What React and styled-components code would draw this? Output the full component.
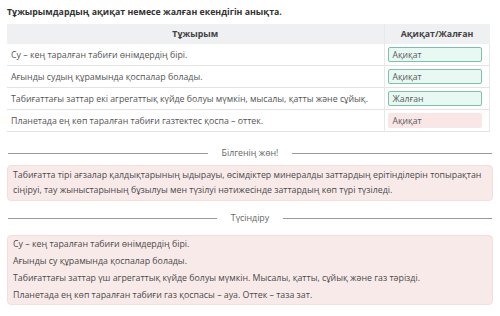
import styled, { createGlobalStyle } from 'styled-components';

const GlobalStyle = createGlobalStyle`
  body {
    margin: 0;
    background: #fff;
    font-family: "Open Sans", "Noto Sans", sans-serif;
    color: #3c3c3c;
  }
`;

const Page = styled.div`
  width: 500px;
  padding: 6px 7px 0 7px;
  box-sizing: border-box;
`;

const Title = styled.h1`
  margin: 0 0 5px 0;
  font-size: 8.8px;
  font-weight: 700;
  line-height: 13px;
  color: #333;
`;

const Table = styled.table`
  width: 483px;
  border-collapse: collapse;
  font-size: 8.8px;
`;

const Th = styled.th`
  height: 20px;
  padding: 0;
  background: #eef0f2;
  font-weight: 700;
  font-size: 8.8px;
  color: #444;
  text-align: center;
  border-left: ${(p) => (p.$divided ? '1px solid #e8e8e8' : 'none')};
`;

const Tr = styled.tr`
  border-bottom: 1px solid #e3e3e3;
`;

const Td = styled.td`
  height: 21px;
  padding: 0 0 0 ${(p) => (p.$divided ? '3px' : '4px')};
  color: #555;
  white-space: nowrap;
  border-left: ${(p) => (p.$divided ? '1px solid #e8e8e8' : 'none')};
  border-right: ${(p) => (p.$divided ? '1px solid #e8e8e8' : 'none')};
`;

const Answer = styled.div`
  width: 94px;
  height: 15px;
  box-sizing: border-box;
  padding-left: 4px;
  display: flex;
  align-items: center;
  font-size: 8.6px;
  color: #5a5a5a;
  border-radius: 2px;
  background: ${(p) => (p.$correct ? '#e8f8f2' : '#f9e6e6')};
  border: 1px solid ${(p) => (p.$correct ? '#7cc0ad' : '#f9e6e6')};
`;

const Divider = styled.div`
  display: flex;
  align-items: center;
  gap: 14px;
  margin: ${(p) => p.$margin};
  font-size: 8.8px;
  line-height: 13px;
  color: #666;

  &::before,
  &::after {
    content: '';
    flex: 1;
    height: 1px;
    background: #9a9a9a;
  }
`;

const Note = styled.div`
  background: #f9eaea;
  border: 1px solid #f3dede;
  border-radius: 4px;
  padding: ${(p) => p.$pad};
  font-size: 8.8px;
  line-height: ${(p) => p.$lh};
  color: #4a4a4a;
`;

const rows = [
  { text: 'Су – кең таралған табиғи өнімдердің бірі.', answer: 'Ақиқат', correct: true },
  { text: 'Ағынды судың құрамында қоспалар болады.', answer: 'Ақиқат', correct: true },
  { text: 'Табиғаттағы заттар екі агрегаттық күйде болуы мүмкін, мысалы, қатты және сұйық.', answer: 'Жалған', correct: true },
  { text: 'Планетада ең көп таралған табиғи газтектес қоспа – оттек.', answer: 'Ақиқат', correct: false },
];

const explanation = [
  'Су – кең таралған табиғи өнімдердің бірі.',
  'Ағынды су құрамында қоспалар болады.',
  'Табиғаттағы заттар үш агрегаттық күйде болуы мүмкін. Мысалы, қатты, сұйық және газ тәрізді.',
  'Планетада ең көп таралған табиғи газ қоспасы – ауа. Оттек – таза зат.',
];

export default function App() {
  return (
    <Page>
      <GlobalStyle />
      <Title>Тұжырымдардың ақиқат немесе жалған екендігін анықта.</Title>
      <Table>
        <thead>
          <tr>
            <Th>Тұжырым</Th>
            <Th $divided style={{ width: 105 }}>Ақиқат/Жалған</Th>
          </tr>
        </thead>
        <tbody>
          {rows.map((r, i) => (
            <Tr key={i}>
              <Td>{r.text}</Td>
              <Td $divided>
                <Answer $correct={r.correct}>{r.answer}</Answer>
              </Td>
            </Tr>
          ))}
        </tbody>
      </Table>
      <Divider $margin="15px 1px 5px 1px">Білгенің жөн!</Divider>
      <Note $pad="2px 4px 2px 5px" $lh="15px">
        Табиғатта тірі ағзалар қалдықтарының ыдырауы, өсімдіктер минералды заттардың ерітінділерін топырақтан сіңіруі, тау жыныстарының бұзылуы мен түзілуі нәтижесінде заттардың көп түрі түзіледі.
      </Note>
      <Divider $margin="11px 1px 10px 1px">Түсіндіру</Divider>
      <Note $pad="0 5px" $lh="17px">
        {explanation.map((l, i) => (
          <div key={i}>{l}</div>
        ))}
      </Note>
    </Page>
  );
}
